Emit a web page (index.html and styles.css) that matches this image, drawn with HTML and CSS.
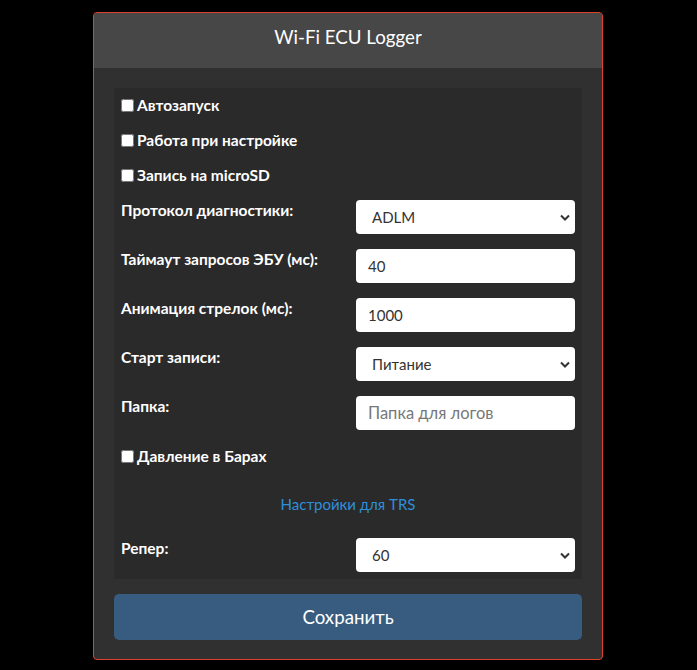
FILE: index.html
```html
<!DOCTYPE html>
<html lang="ru">

<head>
  <meta charset="UTF-8" />
  <meta name="viewport" content="width=device-width, initial-scale=1.0" />
  <title>Wi-Fi ECU Logger</title>
  <link rel="stylesheet" href="styles.css">
</head>

<body>
  <div class="card">
    <div class="card-header">Wi-Fi ECU Logger</div>

    <div class="card-body">
      <form class="panel" id="settingsForm">
        <label class="check-row"><input type="checkbox" id="autostart" /> Автозапуск</label>
        <label class="check-row"><input type="checkbox" id="tuneMode" /> Работа при настройке</label>
        <label class="check-row"><input type="checkbox" id="sdWrite" /> Запись на microSD</label>

        <div class="field-row">
          <label for="protocol">Протокол диагностики:</label>
          <select id="protocol" class="control select">
            <option>ADLM</option>
          </select>
        </div>

        <div class="field-row">
          <label for="timeout">Таймаут запросов ЭБУ (мс):</label>
          <input type="text" id="timeout" class="control" value="40" />
        </div>

        <div class="field-row">
          <label for="anim">Анимация стрелок (мс):</label>
          <input type="text" id="anim" class="control" value="1000" />
        </div>

        <div class="field-row">
          <label for="start">Старт записи:</label>
          <select id="start" class="control select">
            <option>Питание</option>
          </select>
        </div>

        <div class="field-row">
          <label for="folder">Папка:</label>
          <input type="text" id="folder" class="control" placeholder="Папка для логов" />
        </div>

        <label class="check-row bars"><input type="checkbox" id="bars" /> Давление в Барах</label>

        <div class="section-title">Настройки для TRS</div>

        <div class="field-row last">
          <label for="reper">Репер:</label>
          <select id="reper" class="control select">
            <option>60</option>
          </select>
        </div>
      </form>

      <button type="button" class="save-btn">Сохранить</button>
    </div>
  </div>
</body>

</html>
```

FILE: styles.css
```css
body {
  margin: 0;
  padding: 12px 1px 10px 0;
  font-family: Lato, 'Open Sans', sans-serif;
  background-color: #000;
  color: #fff;
}

.card {
  width: 508px;
  margin: 0 auto;
  border: 1px solid #e0412f;
  border-radius: 4px;
  background: #303030;
  overflow: hidden;
}

.card-header {
  box-sizing: border-box;
  height: 55px;
  padding-top: 12px;
  text-align: center;
  line-height: 24px;
  background: #474747;
  font-size: 18.7px;
}

.card-body {
  padding: 20px 20px 19px;
}

.panel {
  background: #2a2a2a;
  padding: 7px 7px 7px;
  margin: 0;
}

.check-row {
  display: flex;
  align-items: center;
  height: 20px;
  margin-bottom: 15px;
  font-size: 15.5px;
  font-weight: bold;
}

.check-row input {
  width: 13px;
  height: 13px;
  margin: 0 3px 0 0;
}

.check-row.bars {
  margin-top: 16px;
}

.field-row {
  display: grid;
  grid-template-columns: 1fr 219px;
  margin-bottom: 15px;
}

.field-row.last {
  margin-bottom: 0;
}

.field-row label {
  font-size: 15.5px;
  font-weight: bold;
  line-height: 20px;
}

.control {
  box-sizing: border-box;
  height: 34px;
  width: 219px;
  border: none;
  border-radius: 4px;
  background-color: #fff;
  color: #333;
  font-family: Lato, 'Open Sans', sans-serif;
  font-size: 15px;
  padding: 0 12px;
  outline: none;
}

.control::placeholder {
  color: #777;
  font-size: 16.5px;
}

.select {
  appearance: none;
  padding-left: 16px;
  background-image: url("data:image/svg+xml,%3Csvg xmlns='http://www.w3.org/2000/svg' width='10' height='7' viewBox='0 0 10 7'%3E%3Cpath d='M1 1.5l4 4 4-4' fill='none' stroke='%23333' stroke-width='2'/%3E%3C/svg%3E");
  background-repeat: no-repeat;
  background-position: right 5px center;
}

.section-title {
  margin: 28px 0 24px;
  text-align: center;
  line-height: 20px;
  font-size: 15px;
  color: #2e8fdc;
}

.save-btn {
  display: block;
  width: 100%;
  height: 46px;
  margin-top: 15px;
  border: none;
  border-radius: 5px;
  background: #385c80;
  color: #fff;
  font-family: Lato, 'Open Sans', sans-serif;
  font-size: 18.7px;
}
```
